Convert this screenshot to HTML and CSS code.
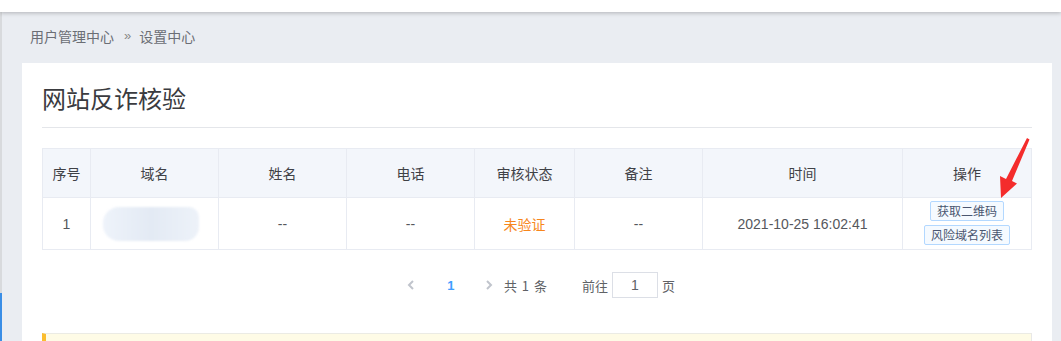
FILE: index.html
```html
<!DOCTYPE html>
<html lang="zh-CN">
<head>
<meta charset="utf-8">
<title>网站反诈核验</title>
<link rel="stylesheet" href="styles.css">
</head>
<body>
<div class="topbar"></div>
<div class="layout">
  <div class="side-edge"></div>
  <div class="main">
    <div class="crumbs"><span>用户管理中心</span><span class="sep">»</span><span>设置中心</span></div>
    <div class="card">
      <h1 class="title">网站反诈核验</h1>
      <div class="table-wrap">
        <table class="grid">
          <colgroup>
            <col style="width:48px"><col style="width:128px"><col style="width:128px"><col style="width:128px"><col style="width:100px"><col style="width:128px"><col style="width:200px"><col style="width:129px">
          </colgroup>
          <thead>
            <tr><th>序号</th><th>域名</th><th>姓名</th><th>电话</th><th>审核状态</th><th>备注</th><th>时间</th><th>操作</th></tr>
          </thead>
          <tbody>
            <tr>
              <td>1</td>
              <td><div class="blur"></div></td>
              <td>--</td>
              <td>--</td>
              <td class="warn">未验证</td>
              <td>--</td>
              <td>2021-10-25 16:02:41</td>
              <td class="ops"><div class="ops-col"><span class="btn">获取二维码</span><span class="btn">风险域名列表</span></div></td>
            </tr>
          </tbody>
        </table>
        <svg class="arrow" width="40" height="64" viewBox="0 0 40 64">
          <path d="M32 2 L34.5 3.5 L17 45 L22 47.5 L6 62 L5 40 L11 43 Z" fill="#f42c2c"/>
        </svg>
      </div>
      <div class="pager">
        <span class="nav prev"><svg width="8" height="10" viewBox="0 0 8 10"><path d="M6 1 L2 5 L6 9" fill="none" stroke="#c0c4cc" stroke-width="2"/></svg></span>
        <span class="page">1</span>
        <span class="nav next"><svg width="8" height="10" viewBox="0 0 8 10"><path d="M2 1 L6 5 L2 9" fill="none" stroke="#c0c4cc" stroke-width="2"/></svg></span>
        <span class="total">共 1 条</span>
        <span class="jump">前往</span>
        <span class="input">1</span>
        <span class="unit">页</span>
      </div>
      <div class="notice"></div>
    </div>
  </div>
</div>
</body>
</html>
```

FILE: styles.css
```css
* { box-sizing: border-box; }
html, body { margin: 0; padding: 0; }
body {
  background: #eaedf2;
  font-family: "Liberation Sans", "Noto Sans CJK SC", sans-serif;
  color: #606266;
  height: 341px;
  overflow: hidden;
}
.topbar {
  height: 12px;
  background: #fff;
  box-shadow: 0 1px 4px rgba(0,0,0,0.25);
  position: relative;
  z-index: 2;
}
.layout { display: flex; }
.side-edge {
  width: 2px;
  flex: none;
  height: 329px;
  background: linear-gradient(#d8dadd 0, #d8dadd 281px, #3a8ee6 281px);
}
.main { flex: 1; padding-left: 20px; padding-right: 10px; }
.crumbs {
  height: 51px;
  display: flex;
  align-items: center;
  padding-left: 8px;
  padding-bottom: 4px;
  font-size: 14px;
  color: #6b6e75;
  font-family: "Noto Sans CJK SC", sans-serif;
}
.crumbs .sep { margin: 0 8px 0 10px; font-size: 13px; color: #888; font-family: "Liberation Sans", sans-serif; }
.card {
  background: #fff;
  padding: 0 20px;
  height: 278px;
}
.title {
  margin: 0;
  height: 65px;
  border-bottom: 1px solid #e4e6ea;
  font-size: 24px;
  font-weight: normal;
  color: #3a3b3f;
  font-family: "Noto Sans CJK SC", sans-serif;
  display: flex;
  align-items: center;
  padding-top: 5px;
}
.table-wrap { position: relative; margin-top: 20px; }
.grid {
  width: 989px;
  border-collapse: collapse;
  table-layout: fixed;
  font-size: 14px;
}
.grid th, .grid td {
  border: 1px solid #e8ebf2;
  text-align: center;
  font-weight: normal;
  padding: 0;
}
.grid th {
  height: 49px;
  background: #f3f6fb;
  color: #3f4146;
  font-family: "Noto Sans CJK SC", sans-serif;
}
.grid td { height: 52px; color: #55575c; }
.grid .warn { color: #f7861c; font-family: "Noto Sans CJK SC", sans-serif; }
.blur {
  width: 96px;
  height: 34px;
  margin: 0 auto 0 12px;
  border-radius: 16px 10px 14px 16px;
  background: linear-gradient(90deg, #eef3fa, #e3eaf4 50%, #edf2f9);
  filter: blur(1px);
}
.ops-col {
  display: flex;
  flex-direction: column;
  align-items: center;
  gap: 4px;
  margin-top: -2px;
}
.btn {
  display: block;
  font-size: 12px;
  line-height: 18px;
  height: 20px;
  padding: 0 6px;
  border: 1px solid #b3d8ff;
  background: #f5faff;
  color: #4a5670;
  border-radius: 2px;
  font-family: "Noto Sans CJK SC", sans-serif;
  white-space: nowrap;
}
.arrow { position: absolute; left: 953px; top: -12px; }
.pager {
  margin-top: 22px;
  display: flex;
  justify-content: center;
  align-items: center;
  height: 26px;
  font-size: 13px;
  color: #606266;
  font-family: "Noto Sans CJK SC", sans-serif;
}
.nav { width: 24px; display: flex; justify-content: center; }
.page { width: 24px; text-align: center; margin-left: 16px; color: #409eff; font-weight: bold; font-family: "Liberation Sans", sans-serif; }
.next { margin-left: 14px; }
.total { margin-left: 3px; word-spacing: 2px; }
.jump { margin-left: 35px; }
.input {
  width: 46px;
  height: 26px;
  margin: 0 4px;
  border: 1px solid #dcdfe6;
  text-align: center;
  line-height: 24px;
  font-size: 14px;
  font-family: "Liberation Sans", sans-serif;
}
.notice {
  margin-top: 35px;
  height: 20px;
  background: #fefbe6;
  border-top: 1px solid #ebebe4;
  border-left: 4px solid #fbbd2e;
  border-right: 1px solid #e8e8e8;
}
```
